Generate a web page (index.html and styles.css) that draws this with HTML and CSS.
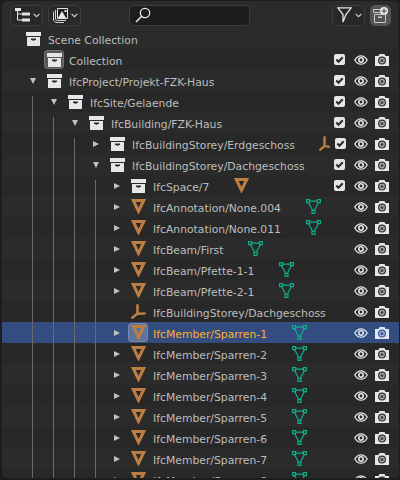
FILE: index.html
```html
<!DOCTYPE html>
<html lang="de">
<head>
  <meta charset="UTF-8">
  <title>Outliner</title>
  <link rel="stylesheet" href="styles.css">
</head>
<body>
  <svg class="defs" width="0" height="0">
    <symbol id="i-coll" viewBox="0 0 15 14">
      <path fill="#e6e6e6" d="M0 0h15v4H0zM1 5h13v9H1z"/>
      <path fill="#2b2b2b" d="M5 6.500h5v1.500H8.500v.8h-2V8H5z"/>
    </symbol>
    <symbol id="i-obj" viewBox="0 0 15 15">
      <path fill="none" stroke="#bd7d43" stroke-width="3" stroke-linejoin="miter" d="M2.300 1.500h10.400L7.500 12.300z"/>
    </symbol>
    <symbol id="i-empty" viewBox="0 0 15 15">
      <path fill="none" stroke="#bd7d43" stroke-width="2.600" stroke-linecap="round" d="M6.500 1.300v8.200M7 9.800l6.700-.300M6 10l-4.700 3.700"/>
    </symbol>
    <symbol id="i-empty-small" viewBox="0 0 11 15">
      <path fill="none" stroke="#bd7d43" stroke-width="2.400" stroke-linecap="round" d="M5.500 1.300v8.500M5.500 9.800l4.300 1M5.200 10.300L1.300 13.700"/>
    </symbol>
    <symbol id="i-mesh" viewBox="0 0 15 15">
      <path fill="none" stroke="#0fae8a" stroke-width="1.200" d="M3.500 2.100h8M2.500 3.500l4 7.500M12.500 3.500l-4 7.500"/>
      <path fill="none" stroke="#0fae8a" stroke-width="1.200" d="M.6.600h3v3h-3zM11.400.600h3v3h-3zM6 11.400h3v3H6z"/>
    </symbol>
    <symbol id="i-check" viewBox="0 0 11 11">
      <rect width="11" height="11" rx="2" fill="#e6e6e6"/>
      <path fill="none" stroke="#2a2a2a" stroke-width="2" d="M2.300 5.500l2.200 2.200 4.200-4.400"/>
    </symbol>
    <symbol id="i-eye" viewBox="0 0 14 10">
      <path fill="none" stroke="#e6e6e6" stroke-width="1.300" d="M.8 5C2.500 2 4.500.8 7 .8s4.500 1.200 6.200 4.200C11.500 8 9.500 9.200 7 9.200S2.500 8 .8 5z"/>
      <circle cx="7" cy="5" r="3" fill="#e6e6e6"/>
      <circle cx="7" cy="5" r="1.400" fill="#2b2b2b"/>
    </symbol>
    <symbol id="i-cam" viewBox="0 0 14 12">
      <path fill="#e6e6e6" d="M0 2h3.500L4.500 0h5l1 2H14v10H0z"/>
      <circle cx="7" cy="6.600" r="4" fill="#333"/>
      <circle cx="7" cy="6.600" r="2.800" fill="#aaa"/>
      <circle cx="7" cy="6.600" r="1.500" fill="#444"/>
    </symbol>
    <symbol id="i-eye-sel" viewBox="0 0 14 10">
      <path fill="none" stroke="#dfe6f2" stroke-width="1.300" d="M.8 5C2.500 2 4.500.8 7 .8s4.500 1.200 6.200 4.200C11.500 8 9.500 9.200 7 9.200S2.500 8 .8 5z"/>
      <circle cx="7" cy="5" r="3" fill="#dfe6f2"/>
      <circle cx="7" cy="5" r="1.400" fill="#334d80"/>
    </symbol>
    <symbol id="i-cam-sel" viewBox="0 0 14 12">
      <path fill="#dfe6f2" d="M0 2h3.500L4.500 0h5l1 2H14v10H0z"/>
      <circle cx="7" cy="6.600" r="4" fill="#3c5a94"/>
      <circle cx="7" cy="6.600" r="2.800" fill="#9db3dc"/>
      <circle cx="7" cy="6.600" r="1.500" fill="#3c5a94"/>
    </symbol>
    <symbol id="i-chev" viewBox="0 0 7 5">
      <path fill="none" stroke="#d0d0d0" stroke-width="1.200" d="M.6.800l2.900 2.900L6.400.8"/>
    </symbol>
  </svg>

  <div class="panel">
    <header class="toolbar">
      <button class="tool tool-wide">
        <svg width="15" height="15" viewBox="0 0 15 15">
          <path fill="#e6e6e6" d="M0 0h6v3H0zM7 4.500h8v3H7zM7 10.500h8v3H7z"/>
          <path fill="none" stroke="#e6e6e6" d="M2.500 3v9H7M2.500 6H7"/>
        </svg>
        <svg class="chev" width="7" height="5"><use href="#i-chev"/></svg>
      </button>
      <button class="tool tool-wide">
        <svg width="15" height="15" viewBox="0 0 15 15">
          <path fill="none" stroke="#d0d0d0" d="M.5 3.500v9l2.500 2h8M2.500 2v9.500l1.500 1h9"/>
          <path fill="#1f1f1f" stroke="#e6e6e6" d="M4.500.5h10v10h-10z"/>
          <path fill="#e6e6e6" d="M5 10l4-7 4 7z"/>
          <path fill="#e6e6e6" d="M11.500 2h2v2h-2z"/>
        </svg>
        <svg class="chev" width="7" height="5"><use href="#i-chev"/></svg>
      </button>
      <div class="search">
        <svg width="16" height="16" viewBox="0 0 16 16">
          <circle cx="10" cy="6" r="4.700" fill="none" stroke="#e6e6e6" stroke-width="1.300"/>
          <path stroke="#e6e6e6" stroke-width="1.600" d="M6.500 9.500L1 15"/>
        </svg>
      </div>
      <button class="tool tool-wide tool-filter">
        <svg width="15" height="16" viewBox="0 0 15 16">
          <path fill="none" stroke="#e6e6e6" stroke-width="1.300" d="M.8.800h13.400L9 7.500 6 15V7.500z"/>
        </svg>
        <svg class="chev" width="7" height="5"><use href="#i-chev"/></svg>
      </button>
      <button class="tool tool-new">
        <svg width="15" height="16" viewBox="0 0 15 16">
          <path fill="none" stroke="#c8c8c8" d="M.5 2.500h7v3h-7zM1.500 7.500h11v8h-11z"/>
          <path fill="#c8c8c8" d="M5 9.500h4V11H5z"/>
          <circle cx="11" cy="4" r="4" fill="#e6e6e6"/>
          <path stroke="#444" d="M11 1.500v5M8.500 4h5"/>
        </svg>
      </button>
    </header>

    <main class="tree">
      <div class="row">
        <span class="icon"><svg class="box" width="15" height="14"><use href="#i-coll"/></svg></span>
        <span class="label">Scene Collection</span>
      </div>
      <div class="row">
        <span class="cell"></span>
        <span class="icon icon-active"><svg class="box" width="15" height="14"><use href="#i-coll"/></svg></span>
        <span class="label">Collection</span>
        <div class="toggles">
          <span class="cell"><svg width="11" height="11"><use href="#i-check"/></svg></span>
          <span class="cell"><svg width="14" height="10"><use href="#i-eye"/></svg></span>
          <span class="cell"><svg width="14" height="12"><use href="#i-cam"/></svg></span>
        </div>
      </div>
      <div class="row">
        <span class="cell arrow-down"></span>
        <span class="icon"><svg class="box" width="15" height="14"><use href="#i-coll"/></svg></span>
        <span class="label">IfcProject/Projekt-FZK-Haus</span>
        <div class="toggles">
          <span class="cell"><svg width="11" height="11"><use href="#i-check"/></svg></span>
          <span class="cell"><svg width="14" height="10"><use href="#i-eye"/></svg></span>
          <span class="cell"><svg width="14" height="12"><use href="#i-cam"/></svg></span>
        </div>
      </div>
      <div class="row">
        <span class="guide guide-first"></span>
        <span class="cell arrow-down"></span>
        <span class="icon"><svg class="box" width="15" height="14"><use href="#i-coll"/></svg></span>
        <span class="label">IfcSite/Gelaende</span>
        <div class="toggles">
          <span class="cell"><svg width="11" height="11"><use href="#i-check"/></svg></span>
          <span class="cell"><svg width="14" height="10"><use href="#i-eye"/></svg></span>
          <span class="cell"><svg width="14" height="12"><use href="#i-cam"/></svg></span>
        </div>
      </div>
      <div class="row">
        <span class="guide"></span><span class="guide guide-first"></span>
        <span class="cell arrow-down"></span>
        <span class="icon"><svg class="box" width="15" height="14"><use href="#i-coll"/></svg></span>
        <span class="label">IfcBuilding/FZK-Haus</span>
        <div class="toggles">
          <span class="cell"><svg width="11" height="11"><use href="#i-check"/></svg></span>
          <span class="cell"><svg width="14" height="10"><use href="#i-eye"/></svg></span>
          <span class="cell"><svg width="14" height="12"><use href="#i-cam"/></svg></span>
        </div>
      </div>
      <div class="row">
        <span class="guide"></span><span class="guide"></span><span class="guide guide-first"></span>
        <span class="cell arrow-right"></span>
        <span class="icon"><svg class="box" width="15" height="14"><use href="#i-coll"/></svg></span>
        <span class="label">IfcBuildingStorey/Erdgeschoss</span>
        <svg class="child child-small" width="11" height="15"><use href="#i-empty-small"/></svg>
        <div class="toggles">
          <span class="cell"><svg width="11" height="11"><use href="#i-check"/></svg></span>
          <span class="cell"><svg width="14" height="10"><use href="#i-eye"/></svg></span>
          <span class="cell"><svg width="14" height="12"><use href="#i-cam"/></svg></span>
        </div>
      </div>
      <div class="row">
        <span class="guide"></span><span class="guide"></span><span class="guide"></span>
        <span class="cell arrow-down"></span>
        <span class="icon"><svg class="box" width="15" height="14"><use href="#i-coll"/></svg></span>
        <span class="label">IfcBuildingStorey/Dachgeschoss</span>
        <div class="toggles">
          <span class="cell"><svg width="11" height="11"><use href="#i-check"/></svg></span>
          <span class="cell"><svg width="14" height="10"><use href="#i-eye"/></svg></span>
          <span class="cell"><svg width="14" height="12"><use href="#i-cam"/></svg></span>
        </div>
      </div>
      <div class="row">
        <span class="guide"></span><span class="guide"></span><span class="guide"></span><span class="guide guide-first"></span>
        <span class="cell arrow-right"></span>
        <span class="icon"><svg class="box" width="15" height="14"><use href="#i-coll"/></svg></span>
        <span class="label">IfcSpace/7</span>
        <svg class="child" width="15" height="15"><use href="#i-obj"/></svg>
        <div class="toggles">
          <span class="cell"><svg width="11" height="11"><use href="#i-check"/></svg></span>
          <span class="cell"><svg width="14" height="10"><use href="#i-eye"/></svg></span>
          <span class="cell"><svg width="14" height="12"><use href="#i-cam"/></svg></span>
        </div>
      </div>
      <div class="row">
        <span class="guide"></span><span class="guide"></span><span class="guide"></span><span class="guide"></span>
        <span class="cell arrow-right"></span>
        <span class="icon"><svg width="15" height="15"><use href="#i-obj"/></svg></span>
        <span class="label">IfcAnnotation/None.004</span>
        <svg class="child" width="15" height="15"><use href="#i-mesh"/></svg>
        <div class="toggles">
          <span class="cell"></span>
          <span class="cell"><svg width="14" height="10"><use href="#i-eye"/></svg></span>
          <span class="cell"><svg width="14" height="12"><use href="#i-cam"/></svg></span>
        </div>
      </div>
      <div class="row">
        <span class="guide"></span><span class="guide"></span><span class="guide"></span><span class="guide"></span>
        <span class="cell arrow-right"></span>
        <span class="icon"><svg width="15" height="15"><use href="#i-obj"/></svg></span>
        <span class="label">IfcAnnotation/None.011</span>
        <svg class="child" width="15" height="15"><use href="#i-mesh"/></svg>
        <div class="toggles">
          <span class="cell"></span>
          <span class="cell"><svg width="14" height="10"><use href="#i-eye"/></svg></span>
          <span class="cell"><svg width="14" height="12"><use href="#i-cam"/></svg></span>
        </div>
      </div>
      <div class="row">
        <span class="guide"></span><span class="guide"></span><span class="guide"></span><span class="guide"></span>
        <span class="cell arrow-right"></span>
        <span class="icon"><svg width="15" height="15"><use href="#i-obj"/></svg></span>
        <span class="label">IfcBeam/First</span>
        <svg class="child" width="15" height="15"><use href="#i-mesh"/></svg>
        <div class="toggles">
          <span class="cell"></span>
          <span class="cell"><svg width="14" height="10"><use href="#i-eye"/></svg></span>
          <span class="cell"><svg width="14" height="12"><use href="#i-cam"/></svg></span>
        </div>
      </div>
      <div class="row">
        <span class="guide"></span><span class="guide"></span><span class="guide"></span><span class="guide"></span>
        <span class="cell arrow-right"></span>
        <span class="icon"><svg width="15" height="15"><use href="#i-obj"/></svg></span>
        <span class="label">IfcBeam/Pfette-1-1</span>
        <svg class="child" width="15" height="15"><use href="#i-mesh"/></svg>
        <div class="toggles">
          <span class="cell"></span>
          <span class="cell"><svg width="14" height="10"><use href="#i-eye"/></svg></span>
          <span class="cell"><svg width="14" height="12"><use href="#i-cam"/></svg></span>
        </div>
      </div>
      <div class="row">
        <span class="guide"></span><span class="guide"></span><span class="guide"></span><span class="guide"></span>
        <span class="cell arrow-right"></span>
        <span class="icon"><svg width="15" height="15"><use href="#i-obj"/></svg></span>
        <span class="label">IfcBeam/Pfette-2-1</span>
        <svg class="child" width="15" height="15"><use href="#i-mesh"/></svg>
        <div class="toggles">
          <span class="cell"></span>
          <span class="cell"><svg width="14" height="10"><use href="#i-eye"/></svg></span>
          <span class="cell"><svg width="14" height="12"><use href="#i-cam"/></svg></span>
        </div>
      </div>
      <div class="row">
        <span class="guide"></span><span class="guide"></span><span class="guide"></span><span class="guide"></span>
        <span class="cell"></span>
        <span class="icon"><svg width="15" height="15"><use href="#i-empty"/></svg></span>
        <span class="label">IfcBuildingStorey/Dachgeschoss</span>
        <div class="toggles">
          <span class="cell"></span>
          <span class="cell"><svg width="14" height="10"><use href="#i-eye"/></svg></span>
          <span class="cell"><svg width="14" height="12"><use href="#i-cam"/></svg></span>
        </div>
      </div>
      <div class="row row-selected">
        <span class="guide"></span><span class="guide"></span><span class="guide"></span><span class="guide"></span>
        <span class="cell arrow-right"></span>
        <span class="icon icon-selected"><svg width="15" height="15"><use href="#i-obj"/></svg></span>
        <span class="label">IfcMember/Sparren-1</span>
        <svg class="child" width="15" height="15"><use href="#i-mesh"/></svg>
        <div class="toggles">
          <span class="cell"></span>
          <span class="cell"><svg width="14" height="10"><use href="#i-eye-sel"/></svg></span>
          <span class="cell"><svg width="14" height="12"><use href="#i-cam-sel"/></svg></span>
        </div>
      </div>
      <div class="row">
        <span class="guide"></span><span class="guide"></span><span class="guide"></span><span class="guide"></span>
        <span class="cell arrow-right"></span>
        <span class="icon"><svg width="15" height="15"><use href="#i-obj"/></svg></span>
        <span class="label">IfcMember/Sparren-2</span>
        <svg class="child" width="15" height="15"><use href="#i-mesh"/></svg>
        <div class="toggles">
          <span class="cell"></span>
          <span class="cell"><svg width="14" height="10"><use href="#i-eye"/></svg></span>
          <span class="cell"><svg width="14" height="12"><use href="#i-cam"/></svg></span>
        </div>
      </div>
      <div class="row">
        <span class="guide"></span><span class="guide"></span><span class="guide"></span><span class="guide"></span>
        <span class="cell arrow-right"></span>
        <span class="icon"><svg width="15" height="15"><use href="#i-obj"/></svg></span>
        <span class="label">IfcMember/Sparren-3</span>
        <svg class="child" width="15" height="15"><use href="#i-mesh"/></svg>
        <div class="toggles">
          <span class="cell"></span>
          <span class="cell"><svg width="14" height="10"><use href="#i-eye"/></svg></span>
          <span class="cell"><svg width="14" height="12"><use href="#i-cam"/></svg></span>
        </div>
      </div>
      <div class="row">
        <span class="guide"></span><span class="guide"></span><span class="guide"></span><span class="guide"></span>
        <span class="cell arrow-right"></span>
        <span class="icon"><svg width="15" height="15"><use href="#i-obj"/></svg></span>
        <span class="label">IfcMember/Sparren-4</span>
        <svg class="child" width="15" height="15"><use href="#i-mesh"/></svg>
        <div class="toggles">
          <span class="cell"></span>
          <span class="cell"><svg width="14" height="10"><use href="#i-eye"/></svg></span>
          <span class="cell"><svg width="14" height="12"><use href="#i-cam"/></svg></span>
        </div>
      </div>
      <div class="row">
        <span class="guide"></span><span class="guide"></span><span class="guide"></span><span class="guide"></span>
        <span class="cell arrow-right"></span>
        <span class="icon"><svg width="15" height="15"><use href="#i-obj"/></svg></span>
        <span class="label">IfcMember/Sparren-5</span>
        <svg class="child" width="15" height="15"><use href="#i-mesh"/></svg>
        <div class="toggles">
          <span class="cell"></span>
          <span class="cell"><svg width="14" height="10"><use href="#i-eye"/></svg></span>
          <span class="cell"><svg width="14" height="12"><use href="#i-cam"/></svg></span>
        </div>
      </div>
      <div class="row">
        <span class="guide"></span><span class="guide"></span><span class="guide"></span><span class="guide"></span>
        <span class="cell arrow-right"></span>
        <span class="icon"><svg width="15" height="15"><use href="#i-obj"/></svg></span>
        <span class="label">IfcMember/Sparren-6</span>
        <svg class="child" width="15" height="15"><use href="#i-mesh"/></svg>
        <div class="toggles">
          <span class="cell"></span>
          <span class="cell"><svg width="14" height="10"><use href="#i-eye"/></svg></span>
          <span class="cell"><svg width="14" height="12"><use href="#i-cam"/></svg></span>
        </div>
      </div>
      <div class="row">
        <span class="guide"></span><span class="guide"></span><span class="guide"></span><span class="guide"></span>
        <span class="cell arrow-right"></span>
        <span class="icon"><svg width="15" height="15"><use href="#i-obj"/></svg></span>
        <span class="label">IfcMember/Sparren-7</span>
        <svg class="child" width="15" height="15"><use href="#i-mesh"/></svg>
        <div class="toggles">
          <span class="cell"></span>
          <span class="cell"><svg width="14" height="10"><use href="#i-eye"/></svg></span>
          <span class="cell"><svg width="14" height="12"><use href="#i-cam"/></svg></span>
        </div>
      </div>
      <div class="row">
        <span class="guide"></span><span class="guide"></span><span class="guide"></span><span class="guide"></span>
        <span class="cell arrow-right"></span>
        <span class="icon"><svg width="15" height="15"><use href="#i-obj"/></svg></span>
        <span class="label">IfcMember/Sparren-8</span>
        <svg class="child" width="15" height="15"><use href="#i-mesh"/></svg>
        <div class="toggles">
          <span class="cell"></span>
          <span class="cell"><svg width="14" height="10"><use href="#i-eye"/></svg></span>
          <span class="cell"><svg width="14" height="12"><use href="#i-cam"/></svg></span>
        </div>
      </div>
    </main>
  </div>
</body>
</html>
```

FILE: styles.css
```css
html, body {
  height: 100%;
  margin: 0;
  overflow: hidden;
}
body {
  background: #1d1d1d;
  font-family: "DejaVu Sans", sans-serif;
  font-size: 10.8px;
  color: #bdbdbd;
}
.defs {
  position: absolute;
}
svg {
  display: block;
  flex: none;
}
.panel {
  height: 477px;
  margin: 1px 1px 2px 2px;
  border-radius: 5px;
  background: #2b2b2b;
  overflow: hidden;
}

/* header */
.toolbar {
  display: flex;
  align-items: center;
  gap: 5px;
  height: 27px;
  padding: 1px 8px 0 8px;
  box-sizing: border-box;
}
.tool {
  display: flex;
  align-items: center;
  gap: 3px;
  height: 21px;
  padding: 0;
  border: 1px solid #3d3d3d;
  border-radius: 5px;
  background: #282828;
  box-sizing: border-box;
}
.tool-wide {
  width: 33px;
  padding-left: 4px;
}
.tool-new {
  width: 21px;
  justify-content: center;
  background: #545454;
  border-color: #545454;
}
.tool-filter {
  margin-left: 77px;
}
.search {
  display: flex;
  align-items: center;
  width: 121px;
  height: 21px;
  margin-left: 43px;
  padding-left: 5px;
  border: 1px solid #3d3d3d;
  border-radius: 5px;
  background: #1d1d1d;
  box-sizing: border-box;
}

/* rows */
.row {
  display: flex;
  align-items: center;
  height: 21px;
  padding: 0 7px 0 24px;
  background: #2b2b2b;
}
.row:nth-child(even) {
  background: #282828;
}
.row-selected,
.row-selected:nth-child(even) {
  background: #334d80;
}
.row-selected .label {
  color: #ffaf29;
}
.cell,
.icon {
  display: flex;
  align-items: center;
  justify-content: center;
  flex: none;
  width: 21px;
  height: 21px;
}
.icon {
  justify-content: flex-start;
}
.guide {
  align-self: stretch;
  flex: none;
  width: 15px;
  margin-left: 6px;
  border-left: 1px solid #6a6a6a;
  box-sizing: border-box;
}
.guide-first {
  margin-top: 5px;
}
.arrow-right::before {
  content: "";
  margin-right: 7px;
  border-left: 6px solid #c0c0c0;
  border-top: 3.5px solid transparent;
  border-bottom: 3.5px solid transparent;
}
.arrow-down::before {
  content: "";
  margin-right: 7px;
  border-top: 6px solid #c0c0c0;
  border-left: 3.5px solid transparent;
  border-right: 3.5px solid transparent;
}
.label {
  margin-left: 1px;
  padding-top: 4px;
  white-space: nowrap;
}
.child {
  margin-left: 25px;
}
.child-small {
  margin-left: 24px;
}
.toggles {
  display: flex;
  margin-left: auto;
}
.icon-active,
.icon-selected {
  position: relative;
}
.icon-active::before,
.icon-selected::before {
  content: "";
  position: absolute;
  left: -3px;
  top: 1px;
  width: 20px;
  height: 19px;
  border: 1px solid rgba(255, 255, 255, .16);
  border-radius: 4px;
  background: rgba(255, 255, 255, .22);
  box-sizing: border-box;
}
.icon svg {
  position: relative;
}
```
